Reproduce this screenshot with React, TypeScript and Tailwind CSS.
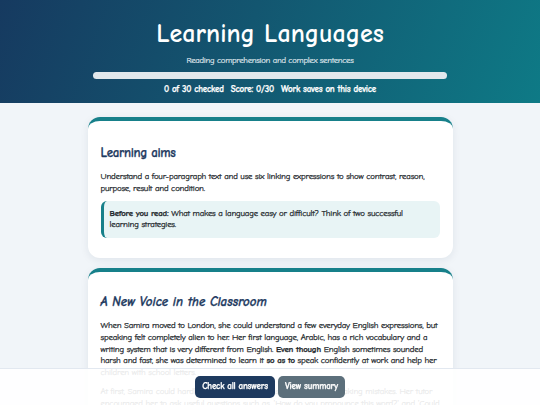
const font = { fontFamily: '"Comic Neue", "Comic Relief", cursive' }

const App = () => {
  return (
    <div className="min-h-screen bg-[#f1f5f9] pb-16 text-[#22272b] [-webkit-text-stroke:0.25px_currentColor]" style={font}>
      <header className="bg-[linear-gradient(110deg,#163a60_0%,#135670_45%,#0e7a86_100%)] px-4 pt-[19px] pb-[8px] text-center text-white">
        <h1 className="text-[26px] leading-[31px] font-bold [-webkit-text-stroke:0px]">Learning Languages</h1>
        <p className="mt-[4px] text-[8.6px] leading-[12px] tracking-[-0.25px] text-[#e3edf2] [-webkit-text-stroke:0.15px_currentColor]">
          Reading comprehension and complex sentences
        </p>
        <div className="mx-auto mt-[6px] h-[7px] max-w-[354px] rounded-full bg-[#e2e8ec]" />
        <div className="mt-[4px] flex justify-center gap-[7px] text-[9px] leading-[12px] font-bold tracking-[-0.2px]">
          <span>0 of 30 checked</span>
          <span>Score: 0/30</span>
          <span>Work saves on this device</span>
        </div>
      </header>

      <main className="mx-auto mt-[14px] flex max-w-[365px] flex-col gap-[10px]">
        <section className="rounded-xl border-t-4 border-[#17808a] bg-white px-[13px] pt-[23px] pb-[20px] shadow-[0_2px_8px_rgba(15,40,70,0.08)]">
          <h2 className="text-[13px] leading-[17px] font-bold tracking-[-0.35px] text-[#1e3a5f]">Learning aims</h2>
          <p className="mt-[9px] text-[8.8px] leading-[12.3px] tracking-[-0.2px]">
            Understand a four-paragraph text and use six linking expressions to show contrast, reason,
            purpose, result and condition.
          </p>
          <div className="mt-[6px] rounded-md border-l-[3px] border-[#17808a] bg-[#e8f4f5] py-[7px] pr-[8px] pl-[6px] text-[8.8px] leading-[11.7px] tracking-[-0.2px]">
            <strong>Before you read:</strong> What makes a language easy or difficult? Think of two successful
            learning strategies.
          </div>
        </section>

        <section className="rounded-xl border-t-4 border-[#17808a] bg-white px-[13px] pt-[21px] pb-[20px] shadow-[0_2px_8px_rgba(15,40,70,0.08)]">
          <h2 className="text-[13px] leading-[17px] font-bold italic text-[#1e3a5f]">A New Voice in the Classroom</h2>
          <p className="mt-[10px] text-[8.8px] leading-[11.75px] tracking-[-0.2px]">
            When Samira moved to London, she could understand a few everyday English expressions, but
            speaking felt completely alien to her. Her first language, Arabic, has a rich vocabulary and a
            writing system that is very different from English. <strong>Even though</strong> English sometimes
            sounded harsh and fast, she was determined to learn it <strong>so as to</strong> speak confidently at
            work and help her children with school letters.
          </p>
          <p className="mt-[7px] text-[8.8px] leading-[11.75px] tracking-[-0.2px]">
            At first, Samira could hardly speak in class because of her fear of making mistakes. Her tutor
            encouraged her to ask useful questions such as, 'How do you pronounce this word?' and 'Could you
            say that again, please?'
          </p>
        </section>
      </main>

      <div className="fixed inset-x-0 bottom-0 flex h-[37px] items-center justify-center gap-[3px] border-t border-[#e2e8f0] bg-white/90">
        <button className="h-[22px] rounded-[5px] bg-[#1e3a5f] px-[7px] text-[9px] font-bold tracking-[-0.2px] text-white">
          Check all answers
        </button>
        <button className="h-[22px] rounded-[5px] bg-[#5c6f7b] px-[7px] text-[9px] font-bold tracking-[-0.2px] text-white">
          View summary
        </button>
      </div>
    </div>
  )
}

export default App
